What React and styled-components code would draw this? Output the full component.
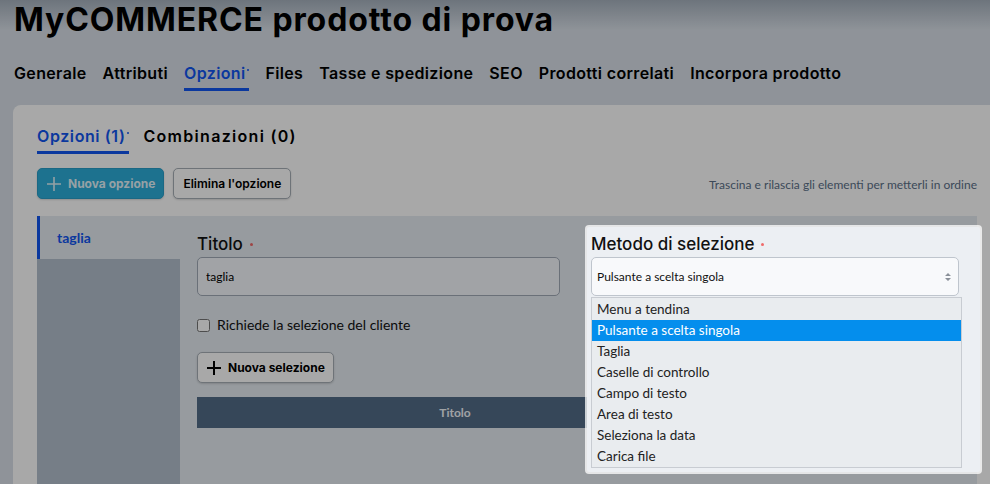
import styled, { createGlobalStyle } from "styled-components";

const HEAD = `Inter, "Noto Sans", sans-serif`;
const BODY = `Lato, "Noto Sans", sans-serif`;

const GlobalStyle = createGlobalStyle`
  html, body {
    margin: 0;
  }
  body {
    background: #d9e0e8;
    font-family: ${BODY};
    color: #000;
    overflow: hidden;
  }
`;

const Page = styled.div`
  min-height: 484px;
  padding-left: 13px;
  background: linear-gradient(#a6b1bd 0, #d9e0e8 30px);
`;

const Title = styled.h1`
  margin: 0;
  padding: 1px 0 0 1px;
  font: 700 32px/38px ${HEAD};
  letter-spacing: 0.9px;
  color: #000;
`;

const TabBar = styled.nav`
  display: flex;
  gap: 16px;
  margin-top: 24px;
  padding-left: 1px;
`;

const Tab = styled.a`
  padding-bottom: 5px;
  border-bottom: 3px solid ${(p) => (p.$active ? "#1256f0" : "transparent")};
  font: 600 16px/20px ${HEAD};
  letter-spacing: ${(p) => p.$spacing || "0.35px"};
  color: ${(p) => (p.$active ? "#1256f0" : "#000")};
  white-space: nowrap;
`;

const Dot = styled.span`
  display: inline-block;
  width: 2px;
  height: 2px;
  margin-left: 2px;
  vertical-align: 8px;
  border-radius: 50%;
  background: ${(p) => p.$color || "#1256f0"};
`;

const Card = styled.section`
  margin-top: 14px;
  padding: 21px 13px 0 24px;
  min-height: 380px;
  background: #fff;
  border-radius: 8px 0 0 0;
`;

const SubTabs = styled.div`
  display: flex;
  gap: 14px;
`;

const Toolbar = styled.div`
  display: flex;
  align-items: center;
  gap: 9px;
  margin-top: 14px;
`;

const Button = styled.button`
  display: inline-flex;
  align-items: center;
  gap: 7px;
  height: 31px;
  padding: 0 ${(p) => (p.$icon ? "8px 0 9px" : "9px")};
  border: 1px solid ${(p) => (p.$primary ? "#2a9fc9" : "#a7afb7")};
  border-radius: 5px;
  background: ${(p) => (p.$primary ? "#2daeda" : "#fff")};
  color: ${(p) => (p.$primary ? "rgba(255,255,255,0.88)" : "#000")};
  font: ${(p) => (p.$bold ? 700 : 600)} 12px/1 ${HEAD};
  box-shadow: 0 1px 2px rgba(0, 0, 0, 0.15);
  cursor: pointer;
`;

const Hint = styled.span`
  margin-left: auto;
  padding-top: 3px;
  font: 12px/16px ${BODY};
  color: #5b7088;
`;

const Panel = styled.div`
  display: grid;
  grid-template-columns: 143px 1fr;
  margin-top: 17px;
  min-height: 280px;
  background: #e5ebf1;
`;

const Sidebar = styled.aside`
  display: flex;
  flex-direction: column;
`;

const SideItem = styled.div`
  height: 43px;
  padding-left: 17px;
  display: flex;
  align-items: center;
  border-left: 3px solid #1256f0;
  font: 700 14px/1 ${BODY};
  color: #1256f0;
`;

const SideRest = styled.div`
  flex: 1;
  background: #b4bfcd;
`;

const Editor = styled.div`
  padding: 18px 18px 0 17px;
`;

const Fields = styled.div`
  display: grid;
  grid-template-columns: 363px 368px;
  gap: 31px;
`;

const Field = styled.div`
  display: flex;
  flex-direction: column;
`;

const SpotField = styled(Field)`
  position: relative;
  z-index: 10;
`;

const Spotlight = styled.div`
  position: absolute;
  z-index: -1;
  top: -7px;
  left: -4px;
  right: -21px;
  height: 245px;
  background: #eceff3;
  border-radius: 2px;
  box-shadow: 0 0 0 2px rgba(255, 255, 255, 0.75),
    0 0 0 3000px rgba(0, 0, 0, 0.34);
`;

const Label = styled.label`
  display: flex;
  align-items: center;
  margin-bottom: 3px;
  font: 500 17px/20px ${HEAD};
  color: #111;
`;

const Required = styled.span`
  width: 3px;
  height: 3px;
  margin-left: 7px;
  border-radius: 50%;
  background: #f06a6a;
`;

const Input = styled.input`
  height: 39px;
  box-sizing: border-box;
  padding: 0 8px;
  border: 1px solid #a1aab7;
  border-radius: 5px;
  background: #f5f8fc;
  font: 12px ${BODY};
  color: #000;
  outline: none;
`;

const SelectWrap = styled.div`
  position: relative;
`;

const SelectBox = styled.div`
  display: flex;
  align-items: center;
  justify-content: space-between;
  height: 39px;
  box-sizing: border-box;
  padding: 0 6px 0 5px;
  border: 1px solid #bfc5cd;
  border-radius: 5px;
  background: #f8f9fb;
  font: 12px ${BODY};
  color: #111;
`;

const OptionList = styled.ul`
  position: absolute;
  top: calc(100% + 1px);
  left: 0;
  right: -3px;
  margin: 0;
  padding: 1px 0 0;
  list-style: none;
  border: 1px solid #c8ccd2;
  background: #e9ecef;
`;

const Option = styled.li`
  height: 21px;
  padding-left: 5px;
  font: 13.5px/21px ${BODY};
  color: ${(p) => (p.$selected ? "#fff" : "#222")};
  background: ${(p) => (p.$selected ? "#048eed" : "transparent")};
`;

const CheckRow = styled.label`
  display: flex;
  align-items: center;
  gap: 7px;
  margin-top: 19px;
  height: 20px;
  font: 14px/20px ${BODY};
  color: #111;

  input {
    margin: 0;
    width: 13px;
    height: 13px;
  }
`;

const ButtonRow = styled.div`
  margin-top: 17px;
`;

const TableHead = styled.div`
  display: grid;
  grid-template-columns: 516px 1fr;
  margin-top: 14px;
  height: 31px;
  background: #536c88;
`;

const HeadCell = styled.div`
  display: flex;
  align-items: center;
  justify-content: center;
  font: 700 12px/1 ${BODY};
  color: #f2f6fa;
`;

const PlusIcon = ({ color, weight }) => (
  <svg width="14" height="14" viewBox="0 0 14 14" fill="none">
    <path d="M7 0v14M0 7h14" stroke={color} strokeWidth={weight} />
  </svg>
);

const SortArrows = () => (
  <svg width="8" height="10" viewBox="0 0 8 10">
    <path d="M4 1 7 4H1z M4 9 1 6h6z" fill="#8a9099" />
  </svg>
);

const tabs = [
  "Generale",
  "Attributi",
  "Opzioni",
  "Files",
  "Tasse e spedizione",
  "SEO",
  "Prodotti correlati",
  "Incorpora prodotto",
];

const methods = [
  "Menu a tendina",
  "Pulsante a scelta singola",
  "Taglia",
  "Caselle di controllo",
  "Campo di testo",
  "Area di testo",
  "Seleziona la data",
  "Carica file",
];

export default function App() {
  return (
    <>
      <GlobalStyle />
      <Page>
        <Title>MyCOMMERCE prodotto di prova</Title>
        <TabBar>
          {tabs.map((t) => (
            <Tab key={t} $active={t === "Opzioni"}>
              {t}
              {t === "Opzioni" && <Dot />}
            </Tab>
          ))}
        </TabBar>

        <Card>
          <SubTabs>
            <Tab $active $spacing="0.6px">
              Opzioni (1)
              <Dot />
            </Tab>
            <Tab $spacing="1.3px">Combinazioni (0)</Tab>
          </SubTabs>

          <Toolbar>
            <Button $primary $bold $icon>
              <PlusIcon color="rgba(255,255,255,0.85)" weight={1.6} />
              Nuova opzione
            </Button>
            <Button>Elimina l'opzione</Button>
            <Hint>Trascina e rilascia gli elementi per metterli in ordine</Hint>
          </Toolbar>

          <Panel>
            <Sidebar>
              <SideItem>taglia</SideItem>
              <SideRest />
            </Sidebar>

            <Editor>
              <Fields>
                <Field>
                  <Label>
                    Titolo
                    <Required />
                  </Label>
                  <Input defaultValue="taglia" />
                </Field>

                <SpotField>
                  <Spotlight />
                  <Label>
                    Metodo di selezione
                    <Required />
                  </Label>
                  <SelectWrap>
                    <SelectBox>
                      Pulsante a scelta singola
                      <SortArrows />
                    </SelectBox>
                    <OptionList>
                      {methods.map((m) => (
                        <Option key={m} $selected={m === "Pulsante a scelta singola"}>
                          {m}
                        </Option>
                      ))}
                    </OptionList>
                  </SelectWrap>
                </SpotField>
              </Fields>

              <CheckRow>
                <input type="checkbox" />
                Richiede la selezione del cliente
              </CheckRow>

              <ButtonRow>
                <Button $bold $icon>
                  <PlusIcon color="#000" weight={2} />
                  Nuova selezione
                </Button>
              </ButtonRow>

              <TableHead>
                <HeadCell>Titolo</HeadCell>
                <HeadCell />
              </TableHead>
            </Editor>
          </Panel>
        </Card>
      </Page>
    </>
  );
}
